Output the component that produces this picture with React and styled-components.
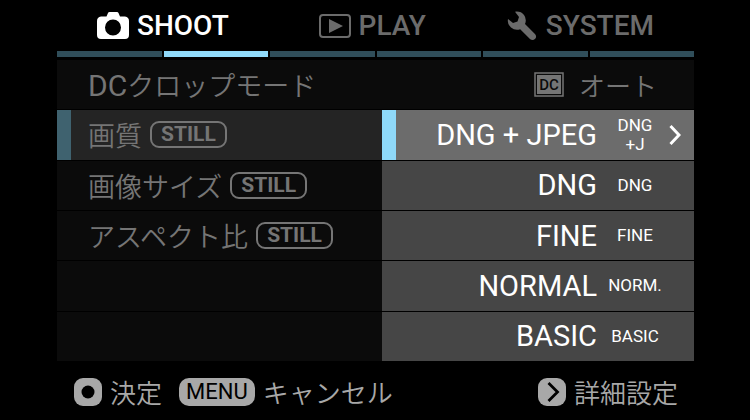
import React from 'react';
import styled, { createGlobalStyle, css } from 'styled-components';

const GlobalStyle = createGlobalStyle`
  * {
    box-sizing: border-box;
  }

  body {
    margin: 0;
    background: #000;
    font-family: "Noto Sans CJK JP", sans-serif;
  }

  button {
    margin: 0;
    padding: 0;
    border: 0;
    background: none;
    color: inherit;
    font: inherit;
    cursor: pointer;
  }
`;

const Screen = styled.main`
  padding: 0 56px 0 57px;
  color: #757575;
`;

const Tabs = styled.nav`
  display: grid;
  grid-template-columns: 40fr 34fr 26fr;
  height: 51px;
  padding: 0 40px;
`;

const Tab = styled.button`
  && {
    display: flex;
    align-items: center;
    gap: 8px;
    color: ${props => props.$active ? '#fff' : '#6b6b6b'};
    font: 500 28px Roboto, sans-serif;
    white-space: nowrap;
  }

  svg {
    flex: none;
  }
`;

const Pages = styled.div`
  display: grid;
  grid-template-columns: repeat(6, 1fr);
  gap: 2px;
  margin-bottom: 3px;
`;

const Page = styled.span`
  height: 6px;
  background: ${props => props.$active ? '#8fd9f9' : '#304e5a'};
`;

const Menu = styled.section`
  display: grid;
  grid-template-columns: 51fr 49fr;
`;

const Column = styled.div`
  display: grid;
  grid-template-rows: repeat(6, 1fr);
  gap: 1px;
  height: 301px;
`;

const Row = styled.button`
  && {
    display: flex;
    align-items: center;
    gap: 8px;
    padding-left: ${props => props.$active ? '17px' : '31px'};
    border-left: ${props => props.$active ? '14px solid #3f626f' : '0'};
    background: ${props => props.$active ? '#242424' : '#0b0b0b'};
    font-size: 27px;
    white-space: nowrap;
  }
`;

const Label = styled.span`
  font-family: Roboto, "Noto Sans CJK JP", sans-serif;
  font-size: ${props => props.$latin ? '30px' : '27px'};
  font-weight: ${props => props.$latin ? '400' : '350'};
`;

const Still = styled.span`
  padding: 0 9px;
  border: 2px solid #757575;
  border-radius: 9px;
  font: 700 21px/23px Roboto, sans-serif;
`;

const Value = styled.div`
  display: flex;
  align-items: center;
  justify-content: flex-end;
  gap: 15px;
  padding-right: 37px;
  background: #0b0b0b;
  font-size: 26px;
  font-weight: 350;
`;

const Option = styled.button`
  && {
    display: grid;
    grid-template-columns: 1fr 60px 12px;
    align-items: center;
    column-gap: 6px;
    padding-right: 13px;
    background: #464646;
    color: #fff;
    font: 29px Roboto, sans-serif;
    text-align: right;
    white-space: nowrap;

    ${props => props.$active && css`
      border-left: 14px solid #8fd9f9;
      background: #6c6c6c;
    `}
  }
`;

const Code = styled.span`
  padding-left: 4px;
  font-size: 17px;
  line-height: 19px;
  text-align: center;
`;

const CodeLine = styled.span`
  display: block;
`;

const Footer = styled.footer`
  display: flex;
  align-items: center;
  gap: 17px;
  height: 59px;
  padding: 2px 16px 0 17px;
  color: #a8a8a8;
`;

const Action = styled.button`
  && {
    display: flex;
    align-items: center;
    gap: 8px;
    margin-left: ${props => props.$last ? 'auto' : '0'};
    font-size: 26px;
    font-weight: 350;
    white-space: nowrap;
  }
`;

const KeyCap = styled.span`
  padding: 0 7px;
  border-radius: 10px;
  background: #a8a8a8;
  color: #000;
  font: 400 22px/28px Roboto, sans-serif;
`;

const CameraIcon = () => (
  <svg width="32" height="28" viewBox="0 0 32 28" fill="currentColor" aria-hidden="true">
    <path fillRule="evenodd" d="M11 1Q11.4 0 12.5 0H20Q21 0 21.5 1L23 4.5H28Q32 5 32 9V23Q32 27 28 27H4Q0 27 0 23V9Q0 5 4 4.5H9.5ZM16 7.5a8 8 0 1 0 0 16a8 8 0 1 0 0-16Z" />
  </svg>
);

const PlayIcon = () => (
  <svg width="32" height="24" viewBox="0 0 32 24" aria-hidden="true">
    <rect x="1" y="1" width="30" height="22" rx="3" fill="none" stroke="currentColor" strokeWidth="2" />
    <path d="M10 5L24 12L10 19Z" fill="currentColor" />
  </svg>
);

const WrenchIcon = () => (
  <svg width="31" height="30" viewBox="0 0 31 30" aria-hidden="true">
    <path
      fill="currentColor"
      d="M8 0.7Q14 0 17 4Q20 8 18 13L28.2 23.2Q30 25.5 28.2 27.8Q25.8 30 23.2 28.2L13.2 18.2Q8 19.8 4 16.5Q0 13 1 8L6 12L10.5 10.5L12 6Z"
    />
  </svg>
);

const DcIcon = () => (
  <svg width="30" height="25" viewBox="0 0 30 25" aria-label="DC">
    <rect x="1" y="1" width="28" height="23" fill="none" stroke="currentColor" strokeWidth="1.5" />
    <rect x="3" y="3" width="24" height="19" fill="currentColor" />
    <text x="15" y="18" textAnchor="middle" fontFamily="Roboto, sans-serif" fontWeight="500" fontSize="15" fill="#0b0b0b">DC</text>
  </svg>
);

const ChevronIcon = () => (
  <svg width="12" height="22" viewBox="0 0 12 22" aria-hidden="true">
    <path d="M1.5 2L10 11L1.5 20" fill="none" stroke="currentColor" strokeWidth="3" />
  </svg>
);

const OkKey = () => (
  <svg width="28" height="28" viewBox="0 0 28 28" aria-hidden="true">
    <rect width="28" height="28" rx="9" fill="currentColor" />
    <circle cx="14" cy="14" r="6.5" fill="#000" />
  </svg>
);

const RightKey = () => (
  <svg width="28" height="28" viewBox="0 0 28 28" aria-hidden="true">
    <rect width="28" height="28" rx="9" fill="currentColor" />
    <path d="M10.5 5L19.5 14L10.5 23" fill="none" stroke="#000" strokeWidth="2.8" />
  </svg>
);

const tabs = [
  { name: 'SHOOT', Icon: CameraIcon, active: true },
  { name: 'PLAY', Icon: PlayIcon },
  { name: 'SYSTEM', Icon: WrenchIcon },
];

const settings = [
  { latin: 'DC', label: 'クロップモード' },
  { label: '画質', still: true, active: true },
  { label: '画像サイズ', still: true },
  { label: 'アスペクト比', still: true },
];

const options = [
  { name: 'DNG + JPEG', code: ['DNG', '+J'], active: true },
  { name: 'DNG', code: ['DNG'] },
  { name: 'FINE', code: ['FINE'] },
  { name: 'NORMAL', code: ['NORM.'] },
  { name: 'BASIC', code: ['BASIC'] },
];

const App = () => {
  return (
    <Screen>
      <GlobalStyle />
      <Tabs>
        {tabs.map(({ name, Icon, active }) => (
          <Tab key={name} $active={active}>
            <Icon />
            {name}
          </Tab>
        ))}
      </Tabs>
      <Pages>
        {[0, 1, 2, 3, 4, 5].map(page => <Page key={page} $active={page === 1} />)}
      </Pages>
      <Menu>
        <Column>
          {settings.map(item => (
            <Row key={item.label} $active={item.active}>
              <span>
                {item.latin && <Label $latin>{item.latin}</Label>}
                <Label>{item.label}</Label>
              </span>
              {item.still && <Still>STILL</Still>}
            </Row>
          ))}
          <Row disabled aria-hidden="true" />
          <Row disabled aria-hidden="true" />
        </Column>
        <Column>
          <Value>
            <DcIcon />
            <span>オート</span>
          </Value>
          {options.map(option => (
            <Option key={option.name} $active={option.active}>
              <span>{option.name}</span>
              <Code>
                {option.code.map(line => <CodeLine key={line}>{line}</CodeLine>)}
              </Code>
              {option.active && <ChevronIcon />}
            </Option>
          ))}
        </Column>
      </Menu>
      <Footer>
        <Action>
          <OkKey />
          決定
        </Action>
        <Action>
          <KeyCap>MENU</KeyCap>
          キャンセル
        </Action>
        <Action $last>
          <RightKey />
          詳細設定
        </Action>
      </Footer>
    </Screen>
  );
};

export default App;
